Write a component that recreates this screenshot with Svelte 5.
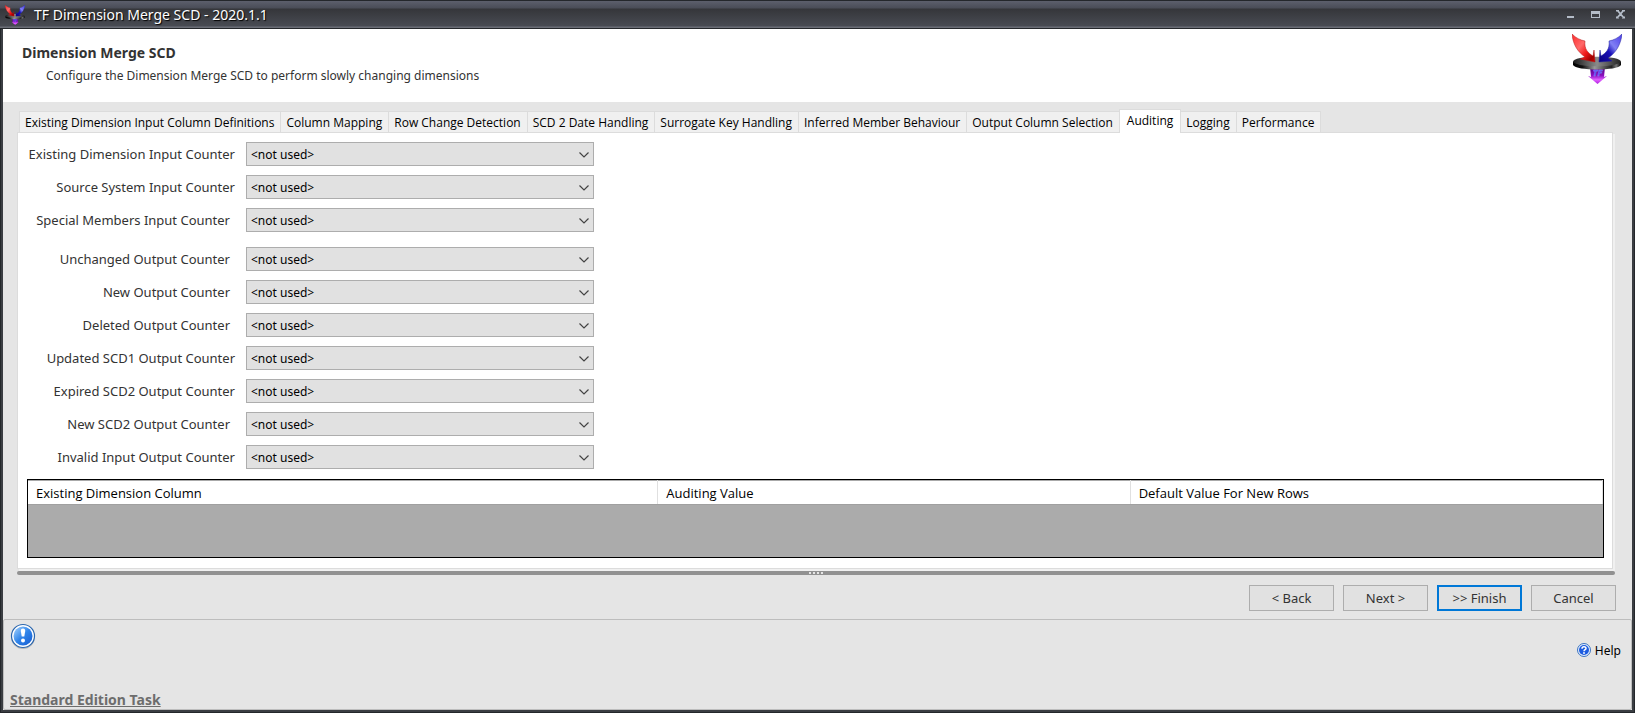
<script lang="ts">
  const tabs = [
    "Existing Dimension Input Column Definitions",
    "Column Mapping",
    "Row Change Detection",
    "SCD 2 Date Handling",
    "Surrogate Key Handling",
    "Inferred Member Behaviour",
    "Output Column Selection",
    "Auditing",
    "Logging",
    "Performance"
  ];
  let activeTab = $state("Auditing");

  const inputCounters = [
    { id: "existing", label: "Existing Dimension Input Counter" },
    { id: "source", label: "Source System Input Counter" },
    { id: "special", label: "Special Members Input Counter", inset: true }
  ];
  const outputCounters = [
    { id: "unchanged", label: "Unchanged Output Counter", inset: true },
    { id: "new", label: "New Output Counter", inset: true },
    { id: "deleted", label: "Deleted Output Counter", inset: true },
    { id: "updated-scd1", label: "Updated SCD1 Output Counter" },
    { id: "expired-scd2", label: "Expired SCD2 Output Counter" },
    { id: "new-scd2", label: "New SCD2 Output Counter", inset: true },
    { id: "invalid", label: "Invalid Input Output Counter" }
  ];
  const groups = [inputCounters, outputCounters];
</script>

{#snippet logo(cls: string)}
  <svg class={cls} viewBox="0 0 50 50" aria-hidden="true">
    <defs>
      <linearGradient id="{cls}-red" x1="0" y1="0" x2="1" y2="1">
        <stop offset="0" stop-color="#ff2a2a" />
        <stop offset="0.4" stop-color="#ff6a6a" />
        <stop offset="0.65" stop-color="#f01818" />
        <stop offset="0.85" stop-color="#a00000" />
        <stop offset="1" stop-color="#d00000" />
      </linearGradient>
      <linearGradient id="{cls}-blue" x1="1" y1="0" x2="0" y2="1">
        <stop offset="0" stop-color="#4a3ae8" />
        <stop offset="0.4" stop-color="#8080f4" />
        <stop offset="0.6" stop-color="#1a10b8" />
        <stop offset="1" stop-color="#08007c" />
      </linearGradient>
      <linearGradient id="{cls}-disc" x1="0" y1="0" x2="1" y2="0">
        <stop offset="0" stop-color="#1a1a1a" />
        <stop offset="0.5" stop-color="#8a8a8a" />
        <stop offset="1" stop-color="#222" />
      </linearGradient>
      <linearGradient id="{cls}-rim" x1="0" y1="0" x2="1" y2="0">
        <stop offset="0" stop-color="#000" />
        <stop offset="0.2" stop-color="#111" />
        <stop offset="0.45" stop-color="#999" />
        <stop offset="0.8" stop-color="#222" />
        <stop offset="0.9" stop-color="#777" />
        <stop offset="1" stop-color="#000" />
      </linearGradient>
      <linearGradient id="{cls}-purple" x1="0" y1="0" x2="0" y2="1">
        <stop offset="0" stop-color="#50007c" />
        <stop offset="0.5" stop-color="#8c10c0" />
        <stop offset="0.75" stop-color="#e060ff" />
        <stop offset="1" stop-color="#b020e0" />
      </linearGradient>
    </defs>
    <path d="M18 33h15l-1 10 3-1-9.500 8-9.500-8 3 1z" fill="url(#{cls}-purple)" />
    <path d="M1 28v3c3 6 45 6 48 0v-3z" fill="url(#{cls}-rim)" />
    <ellipse cx="25" cy="27.500" rx="24" ry="4.800" fill="url(#{cls}-disc)" />
    <path d="M0 0c4 4 8 6 13 7-1 8 3 12 8 15l1-6 1 12-15-3 5-2C6 18 1 11 0 0z" fill="url(#{cls}-red)" stroke="#b01818" stroke-width="0.500" />
    <path d="M50 0c-4 4-8 6-13 7 1 8-3 12-8 15l-1-6-1 12 13-1-4-3c8-5 13-14 14-24z" fill="url(#{cls}-blue)" stroke="#20209c" stroke-width="0.500" />
    <text x="25.500" y="42" text-anchor="middle" font-size="9" font-weight="700" font-style="italic" fill="#4a4af4" stroke="#a0a0ff" stroke-width="0.300">TF</text>
  </svg>
{/snippet}

<div class="window">
  <header class="titlebar">
    {@render logo("app-icon")}
    <h1 class="window-title">TF Dimension Merge SCD - 2020.1.1</h1>
    <div class="window-controls">
      <button type="button" aria-label="Minimize">
        <svg width="9" height="9" viewBox="0 0 9 9"><path d="M1 6h7v2H1z" fill="#b4bcc8" /></svg>
      </button>
      <button type="button" aria-label="Maximize">
        <svg width="9" height="9" viewBox="0 0 9 9"><path d="M0 1h9v7H0zM1 4v3h7V4z" fill="#b4bcc8" fill-rule="evenodd" /></svg>
      </button>
      <button type="button" aria-label="Close">
        <svg width="9" height="9" viewBox="0 0 9 9"><path d="M0 0.500h3M6 0.500h3M0 7.500h3M6 7.500h3M1.500 0.500l6 7M7.500 0.500l-6 7" stroke="#b4bcc8" stroke-width="1.800" /></svg>
      </button>
    </div>
  </header>

  <div class="content">
    <section class="banner">
      <div>
        <h2 class="banner-title">Dimension Merge SCD</h2>
        <p class="banner-text">Configure the Dimension Merge SCD to perform slowly changing dimensions</p>
      </div>
      {@render logo("banner-logo")}
    </section>

    <main class="workspace">
      <div class="tabs" role="tablist">
        {#each tabs as tab}
          <button
            type="button"
            role="tab"
            class="tab"
            class:active={tab === activeTab}
            aria-selected={tab === activeTab}
            onclick={() => (activeTab = tab)}
          >{tab}</button>
        {/each}
      </div>

      <div class="panel">
        {#each groups as counters}
          <div class="counters">
            {#each counters as counter}
              <label for={counter.id} class="counter-label" class:inset={counter.inset}>{counter.label}</label>
              <div class="select-box">
                <select id={counter.id}>
                  <option>&lt;not used&gt;</option>
                </select>
                <svg class="chevron" width="10" height="6" viewBox="0 0 10 6"><path d="M0.500 0.500L5 5l4.500-4.500" fill="none" stroke="#444" stroke-width="1.200" /></svg>
              </div>
            {/each}
          </div>
        {/each}

        <div class="grid">
          <table>
            <thead>
              <tr>
                <th class="col-dimension">Existing Dimension Column</th>
                <th class="col-auditing">Auditing Value</th>
                <th>Default Value For New Rows</th>
              </tr>
            </thead>
          </table>
        </div>
      </div>

      <div class="splitter">
        <i></i><i></i><i></i><i></i>
      </div>

      <div class="actions">
        <button type="button">&lt; Back</button>
        <button type="button">Next &gt;</button>
        <button type="button" class="primary">&gt;&gt; Finish</button>
        <button type="button">Cancel</button>
      </div>
    </main>

    <footer class="footer">
      <div class="footer-left">
        <svg width="26" height="26" viewBox="0 0 26 26" aria-hidden="true">
          <defs>
            <linearGradient id="info" x1="0" y1="0" x2="1" y2="1">
              <stop offset="0.200" stop-color="#7ab6f6" />
              <stop offset="0.500" stop-color="#2f84ea" />
              <stop offset="0.900" stop-color="#1a62d4" />
            </linearGradient>
          </defs>
          <circle cx="13" cy="14" r="12" fill="#b8b8b8" />
          <circle cx="13" cy="13" r="11.500" fill="#fff" stroke="#2a66ae" stroke-width="1.200" />
          <circle cx="13" cy="13" r="9.500" fill="url(#info)" />
          <path d="M13 5.500c1.500 0 2.400 1 2.200 2.500l-.9 5.500h-2.600L10.800 8c-.2-1.500.7-2.500 2.200-2.500z" fill="#fff" />
          <circle cx="13" cy="17.500" r="2" fill="#fff" />
        </svg>
        <a href="#edition" class="edition">Standard Edition Task</a>
      </div>
      <a href="#help" class="help">
        <svg width="14" height="14" viewBox="0 0 14 14" aria-hidden="true">
          <circle cx="7" cy="7" r="6.500" fill="#e4eefc" stroke="#3c74c0" />
          <circle cx="7" cy="7" r="5" fill="#1d5ce0" />
          <path d="M5 5.800C5 3.200 9 3.200 9 5.500c0 1.200-2 1.300-2 2.800" fill="none" stroke="#fff" stroke-width="1.500" />
          <circle cx="7" cy="10" r="0.900" fill="#fff" />
        </svg>
        Help
      </a>
    </footer>
  </div>
</div>

<style>
  :global(body) {
    margin: 0;
  }
  .window {
    --ui-font: "Noto Sans", Tahoma, sans-serif;
    --grid-font: "Open Sans", Tahoma, sans-serif;
    box-sizing: border-box;
    min-height: 100vh;
    display: flex;
    flex-direction: column;
    padding: 0 3px 3px;
    background: #3a3d42;
    box-shadow: inset 0 0 0 1px #24272b;
    color: #333;
    font-family: var(--ui-font);
    font-size: 13px;
  }
  button, select {
    font: inherit;
    color: inherit;
  }
  .titlebar {
    box-sizing: border-box;
    height: 29px;
    display: flex;
    align-items: center;
    gap: 9px;
    margin: 0 -3px;
    padding: 0 10px 0 5px;
    border-top: 1px solid #24272b;
    border-bottom: 1px solid #24272b;
    background: linear-gradient(#5c5f6c 0, #4a4d57 7px, #35363a 8px, #484b53 25px, #6a6d76 26px);
  }
  :global(.app-icon) {
    width: 20px;
    height: 20px;
  }
  :global(.banner-logo) {
    width: 50px;
    height: 50px;
  }
  .window-title {
    flex: 1;
    margin: 0;
    color: #fff;
    font-size: 14px;
    font-weight: 400;
    line-height: 20px;
    text-shadow: 1px 1px 1px #000;
  }
  .window-controls {
    display: flex;
    gap: 16px;
  }
  .window-controls button {
    display: flex;
    padding: 0;
    border: 0;
    background: none;
  }
  .content {
    flex: 1;
    display: flex;
    flex-direction: column;
    background: #e5e5e5;
  }
  .banner {
    display: flex;
    justify-content: space-between;
    height: 73px;
    box-sizing: border-box;
    padding: 5px 10px 0 19px;
    background: #fff;
  }
  .banner-title {
    margin: 9px 0 0;
    font-size: 14px;
    font-weight: 700;
    line-height: 20px;
  }
  .banner-text {
    margin: 4px 0 0 24px;
    font-size: 12px;
    line-height: 18px;
  }
  .workspace {
    padding: 7px 17px 8px 14px;
  }
  .tabs {
    display: flex;
    align-items: flex-end;
    padding-left: 2px;
  }
  .tab {
    height: 21px;
    padding: 1px 6px 0 5px;
    border: 1px solid #dcdcdc;
    border-width: 1px 0 0 1px;
    background: #f0f0f0;
    color: #000;
    font-family: var(--grid-font);
    font-size: 12px;
    line-height: 20px;
    white-space: nowrap;
  }
  .tab:last-child {
    border-right-width: 1px;
  }
  .tab.active {
    height: 24px;
    margin-bottom: -1px;
    padding: 0 7px 2px;
    border-right-width: 1px;
    background: #fff;
    z-index: 1;
  }
  .tab.active + .tab {
    border-left-width: 0;
  }
  .panel {
    margin-right: 2px;
    padding: 9px 8px 10px 9px;
    border: 1px solid #dcdcdc;
    box-shadow: 2px 2px 0 #f0f0f0;
    background: #fff;
  }
  .counters {
    display: grid;
    grid-template-columns: 208px 348px;
    row-gap: 9px;
    column-gap: 11px;
    margin-bottom: 15px;
  }
  .counters:nth-child(2) {
    margin-bottom: 10px;
  }
  .counter-label {
    text-align: right;
    line-height: 24px;
    white-space: nowrap;
  }
  .counter-label.inset {
    padding-right: 5px;
  }
  .select-box {
    position: relative;
    height: 24px;
  }
  .select-box select {
    display: block;
    box-sizing: border-box;
    width: 100%;
    height: 24px;
    padding: 0 4px;
    border: 1px solid #adadad;
    border-radius: 0;
    appearance: none;
    background: #e1e1e1;
    color: #000;
    font-size: 12px;
  }
  .chevron {
    position: absolute;
    top: 10px;
    right: 5px;
    pointer-events: none;
  }
  .grid {
    box-sizing: border-box;
    height: 79px;
    border: 1px solid #000;
    background: #ababab;
  }
  table {
    width: 100%;
    table-layout: fixed;
    border-collapse: collapse;
    border-top: 1px solid #aaa;
  }
  th {
    box-sizing: border-box;
    height: 24px;
    padding: 0 8px;
    border-right: 1px solid #e0e0e0;
    border-bottom: 1px solid #a0a0a0;
    background: #fff;
    color: #000;
    font-family: var(--grid-font);
    font-size: 13px;
    font-weight: 400;
    line-height: 22px;
    text-align: left;
  }
  .col-dimension {
    width: 40%;
  }
  .col-auditing {
    width: 30%;
  }
  .splitter {
    display: flex;
    justify-content: center;
    align-items: center;
    gap: 2px;
    height: 4px;
    margin: 2px 0 10px;
    border-radius: 2px;
    background: #919191;
  }
  .splitter i {
    width: 2px;
    height: 2px;
    background: #e5e5e5;
  }
  .actions {
    display: flex;
    justify-content: flex-end;
    gap: 9px;
    margin-right: -1px;
  }
  .actions button {
    width: 85px;
    height: 26px;
    padding: 0;
    border: 1px solid #adadad;
    background: #e1e1e1;
  }
  .actions .primary {
    border: 2px solid #0078d7;
  }
  .footer {
    flex: 1;
    display: flex;
    justify-content: space-between;
    padding: 3px 10px 0 6px;
    border: 1px solid #bdbdbd;
    border-radius: 2px;
  }
  .footer-left {
    display: flex;
    flex-direction: column;
    justify-content: space-between;
  }
  .edition {
    color: #6d6d6d;
    font-size: 14px;
    font-weight: 700;
    line-height: 18px;
  }
  .help {
    display: flex;
    align-items: center;
    gap: 4px;
    height: 18px;
    margin-top: 18px;
    color: #000;
    font-size: 12px;
    text-decoration: none;
  }
</style>
